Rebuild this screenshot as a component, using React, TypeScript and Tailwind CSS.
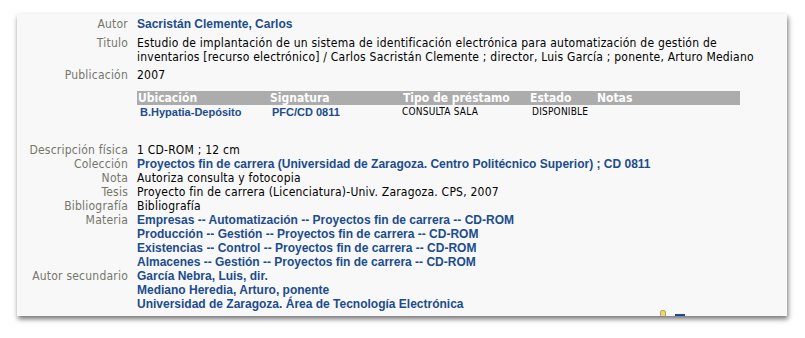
const label = "text-right text-[#74766b] whitespace-nowrap";
const link = "font-['Liberation_Sans',Arial,sans-serif] font-bold text-[#1b4c8e] tracking-normal";

const Row = ({ name, children, className = "" }: { name: string; children: React.ReactNode; className?: string }) => (
  <div className={`grid grid-cols-[111px_1fr] gap-x-[9px] ${className}`}>
    <div className={label}>{name}</div>
    <div>{children}</div>
  </div>
);

const App = () => {
  return (
    <div className="w-[805px] h-[338px] bg-white pt-[14px] pl-[17px]">
      <div className="relative w-[770px] h-[302px] bg-[#f8f8f8] overflow-hidden shadow-[1px_3px_5px_rgba(0,0,0,0.55)] pt-[3px] font-['DejaVu_Sans_Condensed','DejaVu_Sans',sans-serif] text-[12px] leading-[14px] tracking-[0.22px] text-black">
        <Row name="Autor">
          <span className={link}>Sacristán Clemente, Carlos</span>
        </Row>
        <Row name="Titulo" className="mt-[5px]">
          Estudio de implantación de un sistema de identificación electrónica para automatización de gestión de
          <br />
          inventarios [recurso electrónico] / Carlos Sacristán Clemente ; director, Luis García ; ponente, Arturo Mediano
        </Row>
        <Row name="Publicación" className="mt-[4px]">
          2007
        </Row>

        {/* ejemplares */}
        <div className="ml-[120px] mt-[9px] w-[603px]">
          <div className="grid grid-cols-[132px_133px_127px_67px_1fr] h-[14px] bg-[#acacac] text-white font-bold pl-[1px] tracking-normal">
            <div>Ubicación</div>
            <div>Signatura</div>
            <div>Tipo de préstamo</div>
            <div>Estado</div>
            <div>Notas</div>
          </div>
          <div className="grid grid-cols-[132px_133px_127px_67px_1fr] h-[14px] items-center">
            <div className={`${link} text-[11px] pl-[3px]`}>B.Hypatia-Depósito</div>
            <div className={`${link} text-[11px] pl-[3px]`}>PFC/CD 0811</div>
            <div className="text-[10px]">CONSULTA SALA</div>
            <div className="text-[10px] pl-[3px]">DISPONIBLE</div>
            <div></div>
          </div>
        </div>

        <Row name="Descripción física" className="mt-[24px]">
          1 CD-ROM ; 12 cm
        </Row>
        <Row name="Colección">
          <span className={link}>
            Proyectos fin de carrera (Universidad de Zaragoza. Centro Politécnico Superior) ; CD 0811
          </span>
        </Row>
        <Row name="Nota">Autoriza consulta y fotocopia</Row>
        <Row name="Tesis">Proyecto fin de carrera (Licenciatura)-Univ. Zaragoza. CPS, 2007</Row>
        <Row name="Bibliografía">Bibliografía</Row>
        <Row name="Materia">
          <div className={`${link} flex flex-col`}>
            <span>Empresas -- Automatización -- Proyectos fin de carrera -- CD-ROM</span>
            <span>Producción -- Gestión -- Proyectos fin de carrera -- CD-ROM</span>
            <span>Existencias -- Control -- Proyectos fin de carrera -- CD-ROM</span>
            <span>Almacenes -- Gestión -- Proyectos fin de carrera -- CD-ROM</span>
          </div>
        </Row>
        <Row name="Autor secundario">
          <div className={`${link} flex flex-col`}>
            <span>García Nebra, Luis, dir.</span>
            <span>Mediano Heredia, Arturo, ponente</span>
            <span>Universidad de Zaragoza. Área de Tecnología Electrónica</span>
          </div>
        </Row>

        {/* icono inferior, cortado por el borde */}
        <div className="absolute left-[643px] top-[295px] flex items-start gap-[9px]">
          <div className="w-[6px] h-[9px] mt-[1px] bg-[#e8d77a] border border-[#b8a84a] rounded-t-[2px]"></div>
          <div className="w-[10px] h-[4px] mt-[5px] bg-[#1b4c8e]"></div>
        </div>
      </div>
    </div>
  );
};

export default App;
